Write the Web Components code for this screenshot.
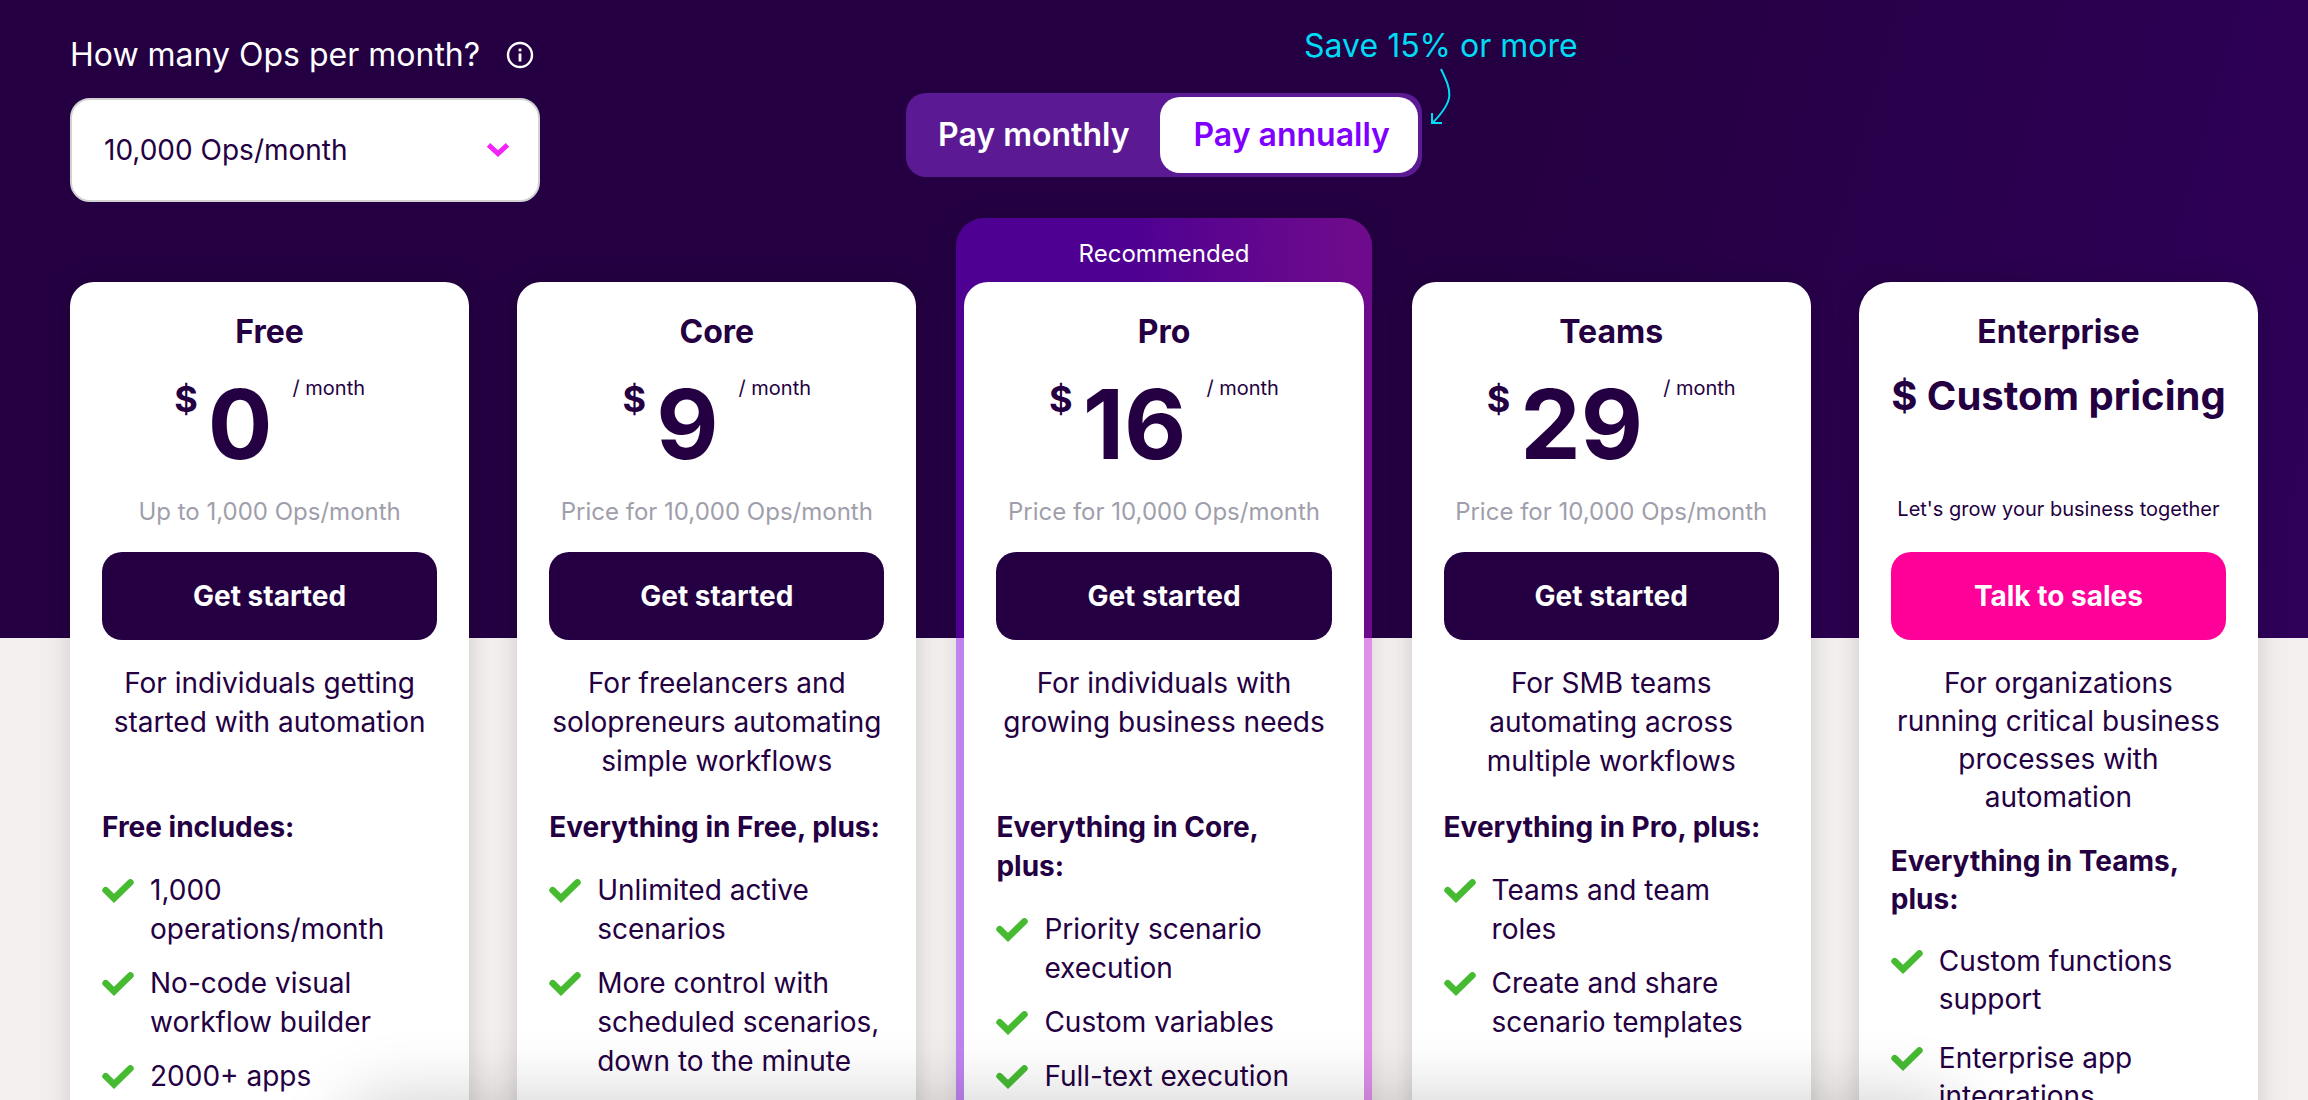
<!DOCTYPE html>
<html lang="en">
<head>
<meta charset="utf-8">
<title>Pricing</title>
<style>
  :root {
    --ink: #240042;
    --paper: #f3efee;
    --accent: #ff0099;
    --violet: #8000ff;
    --cyan: #00dcf5;
  }
  body {
    margin: 0;
    background: var(--paper);
    color: var(--ink);
    font-family: Inter, "Liberation Sans", sans-serif;
    height: 100vh;
    overflow: hidden;
  }
</style>
</head>
<body>
<pricing-page>
  <ops-select slot="ops"></ops-select>
  <billing-toggle slot="billing"></billing-toggle>

  <plan-card>
    <span slot="name">Free</span>
    <plan-price slot="price" amount="0"></plan-price>
    <span slot="note">Up to 1,000 Ops/month</span>
    <span slot="action">Get started</span>
    <span slot="summary">For individuals getting started with automation</span>
    <span slot="heading">Free includes:</span>
    <plan-feature>1,000 operations/month</plan-feature>
    <plan-feature>No-code visual workflow builder</plan-feature>
    <plan-feature>2000+ apps</plan-feature>
  </plan-card>

  <plan-card>
    <span slot="name">Core</span>
    <plan-price slot="price" amount="9"></plan-price>
    <span slot="note">Price for 10,000 Ops/month</span>
    <span slot="action">Get started</span>
    <span slot="summary">For freelancers and solopreneurs automating simple workflows</span>
    <span slot="heading">Everything in Free, plus:</span>
    <plan-feature>Unlimited active scenarios</plan-feature>
    <plan-feature>More control with scheduled scenarios, down to the minute</plan-feature>
  </plan-card>

  <plan-card recommended>
    <span slot="ribbon">Recommended</span>
    <span slot="name">Pro</span>
    <plan-price slot="price" amount="16"></plan-price>
    <span slot="note">Price for 10,000 Ops/month</span>
    <span slot="action">Get started</span>
    <span slot="summary">For individuals with growing business needs</span>
    <span slot="heading">Everything in Core, plus:</span>
    <plan-feature>Priority scenario execution</plan-feature>
    <plan-feature>Custom variables</plan-feature>
    <plan-feature>Full-text execution</plan-feature>
  </plan-card>

  <plan-card>
    <span slot="name">Teams</span>
    <plan-price slot="price" amount="29"></plan-price>
    <span slot="note">Price for 10,000 Ops/month</span>
    <span slot="action">Get started</span>
    <span slot="summary">For SMB teams automating across multiple workflows</span>
    <span slot="heading">Everything in Pro, plus:</span>
    <plan-feature>Teams and team roles</plan-feature>
    <plan-feature>Create and share scenario templates</plan-feature>
  </plan-card>

  <plan-card enterprise>
    <span slot="name">Enterprise</span>
    <plan-price slot="price" custom="$ Custom pricing"></plan-price>
    <span slot="note">Let's grow your business together</span>
    <span slot="action">Talk to sales</span>
    <span slot="summary">For organizations running critical business processes with automation</span>
    <span slot="heading">Everything in Teams, plus:</span>
    <plan-feature>Custom functions support</plan-feature>
    <plan-feature>Enterprise app integrations</plan-feature>
  </plan-card>
</pricing-page>

<script>
  const shadow = (host, html) => {
    host.attachShadow({ mode: "open" }).innerHTML = html;
  };

  // Page shell: dark band behind the controls and the top of the cards.
  customElements.define("pricing-page", class extends HTMLElement {
    constructor() {
      super();
      shadow(this, `
        <style>
          :host {
            display: block;
            min-height: 100vh;
            background:
              linear-gradient(105deg, #240042 0 63%, #2e0058 98%) top / 100% 638px no-repeat,
              var(--paper);
          }
          header, .plans { padding: 0 50px 0 70px; }
          header {
            display: grid;
            grid-template-columns: 1fr auto 1fr;
            align-items: start;
            height: 282px;
            box-sizing: border-box;
          }
          .plans {
            display: grid;
            grid-template-columns: repeat(5, minmax(0, 1fr));
            column-gap: 48px;
          }
          .dock-shadow {
            position: fixed;
            top: 100%;
            left: 15%;
            right: 15%;
            height: 120px;
            border-radius: 40px;
            box-shadow: 0 0 70px rgba(0, 0, 0, .2);
            pointer-events: none;
          }
        </style>
        <header><slot name="ops"></slot><slot name="billing"></slot></header>
        <main class="plans"><slot></slot></main>
        <div class="dock-shadow"></div>`);
    }
  });

  customElements.define("ops-select", class extends HTMLElement {
    constructor() {
      super();
      shadow(this, `
        <style>
          :host { display: block; padding-top: 35px; color: #fff; }
          .row { display: flex; align-items: center; gap: 26px; height: 40px; margin-bottom: 23px; }
          label { font-size: 32px; line-height: 40px; }
          .info { display: block; width: 28px; height: 28px; }
          .box { display: flex; align-items: center; width: 470px; position: relative; }
          select {
            appearance: none;
            width: 100%;
            height: 104px;
            padding: 0 32px;
            border: 2px solid #d2d2d2;
            border-radius: 20px;
            background: #fff;
            color: var(--ink);
            font: 28px/36px Inter, "Liberation Sans", sans-serif;
          }
          .chevron { position: absolute; right: 30px; width: 24px; height: 16px; pointer-events: none; }
        </style>
        <div class="row">
          <label for="ops">How many Ops per month?</label>
          <svg class="info" viewBox="0 0 28 28" fill="none" stroke="#fff" stroke-width="2.4" aria-hidden="true">
            <circle cx="14" cy="14" r="12"/>
            <path d="M14 12.5V20.5" stroke-width="2.8"/><path d="M14 7.6V10.4" stroke-width="2.8"/>
          </svg>
        </div>
        <div class="box">
          <select id="ops"><option>10,000 Ops/month</option></select>
          <svg class="chevron" viewBox="0 0 24 16" fill="none" stroke="#f224f7" stroke-width="5" aria-hidden="true">
            <path d="M2.5 2.8L12 11.5L21.5 2.8"/>
          </svg>
        </div>`);
    }
  });

  customElements.define("billing-toggle", class extends HTMLElement {
    constructor() {
      super();
      shadow(this, `
        <style>
          :host { display: block; position: relative; padding-top: 93px; }
          .track {
            display: flex;
            box-sizing: border-box;
            height: 84px;
            padding: 4px;
            border-radius: 20px;
            background: #5b1994;
          }
          button {
            border: 0;
            border-radius: 20px;
            background: none;
            color: #fff;
            padding: 0 31px 0 28px;
            font: 600 32px/40px Inter, "Liberation Sans", sans-serif;
          }
          button[aria-pressed="true"] { padding: 0 28px 0 33px; background: #fff; color: var(--violet); }
          .callout {
            position: absolute;
            top: 26px;
            left: 398px;
            color: var(--cyan);
            font-size: 32px;
            line-height: 40px;
            white-space: nowrap;
          }
          svg { display: block; width: 24px; height: 60px; margin-left: 126px; }
        </style>
        <div class="track">
          <button type="button" aria-pressed="false">Pay monthly</button>
          <button type="button" aria-pressed="true">Pay annually</button>
        </div>
        <div class="callout">Save 15% or more
          <svg viewBox="0 0 24 60" fill="none" stroke="#00dcf5" stroke-width="2" aria-hidden="true">
            <path d="M11 3C22 26 25 34 2.5 57"/><path d="M2 47V57H12"/>
          </svg>
        </div>`);
    }
  });

  customElements.define("plan-price", class extends HTMLElement {
    connectedCallback() {
      const custom = this.getAttribute("custom");
      const body = custom
        ? `<span class="custom">${custom}</span>`
        : `<span class="currency">$</span><span class="amount">${this.getAttribute("amount")}</span><span class="period">/ month</span>`;
      shadow(this, `
        <style>
          :host { display: flex; justify-content: center; height: 96px; white-space: nowrap; }
          .currency { font-size: 36px; line-height: 40px; font-weight: 700; margin: 3px 10px 0 0; }
          .amount { font-size: 96px; line-height: 96px; font-weight: 700; }
          .period { font-size: 20px; line-height: 24px; margin-left: 20px; }
          .custom { font-size: 40px; line-height: 40px; font-weight: 700; }
        </style>${body}`);
    }
  });

  customElements.define("plan-feature", class extends HTMLElement {
    constructor() {
      super();
      shadow(this, `
        <style>
          :host { display: flex; gap: 16px; font-size: 28px; }
          svg { flex: none; width: 32px; height: 24px; margin-top: 8px; }
        </style>
        <svg viewBox="0 0 32 24" fill="none" stroke="#46bb32" stroke-width="6.6" stroke-linecap="round" aria-hidden="true">
          <path d="M3.6 11.2L12 19.4L28.4 3.4"/>
        </svg>
        <span><slot></slot></span>`);
    }
    connectedCallback() { this.setAttribute("role", "listitem"); }
  });

  customElements.define("plan-card", class extends HTMLElement {
    constructor() {
      super();
      shadow(this, `
        <style>
          :host { display: block; position: relative; text-align: center; --line: 39px; --gap: 15px; --block: 24px; }
          :host([enterprise]) { --line: 38px; --gap: 21px; --block: 26px; }
          .ribbon { display: none; }
          :host([recommended]) .ribbon {
            display: block;
            position: absolute;
            inset: -64px -8px 0;
            border-radius: 28px;
            padding-top: 19px;
            font-size: 24px;
            line-height: 34px;
            color: #fff;
            background: linear-gradient(88deg, rgba(128, 0, 243, .45) 45%, rgba(200, 24, 230, .45) 95%);
            box-shadow: 0 0 24px rgba(0, 0, 0, .1);
          }
          article {
            position: relative;
            box-sizing: border-box;
            min-height: 960px;
            padding: 30px 32px;
            border-radius: 24px;
            background: #fff;
            box-shadow: 0 0 24px rgba(0, 0, 0, .16);
          }
          :host([recommended]) article { box-shadow: none; }
          h2 { margin: 0 0 24px; font-size: 32px; line-height: 40px; font-weight: 700; }
          .note { margin: 23px 0; font-size: 24px; line-height: 34px; color: #9f9eab; white-space: nowrap; }
          button {
            display: block;
            width: 100%;
            height: 88px;
            border: 0;
            border-radius: 20px;
            background: var(--ink);
            color: #fff;
            font: 700 28px/36px Inter, "Liberation Sans", sans-serif;
          }
          .summary { margin: 24px 0 var(--block); min-height: 120px; font-size: 28px; line-height: var(--line); }
          h3 { margin: 0 0 24px; font-size: 28px; line-height: var(--line); font-weight: 700; text-align: left; }
          .features { display: flex; flex-direction: column; gap: var(--gap); line-height: var(--line); text-align: left; }
          :host([enterprise]) article { border-radius: 32px; }
          :host([enterprise]) .note { font-size: 20px; line-height: 28px; padding-bottom: 6px; color: var(--ink); }
          :host([enterprise]) button { background: var(--accent); }
        </style>
        <div class="ribbon"><slot name="ribbon"></slot></div>
        <article>
          <h2><slot name="name"></slot></h2>
          <slot name="price"></slot>
          <p class="note"><slot name="note"></slot></p>
          <button type="button"><slot name="action"></slot></button>
          <p class="summary"><slot name="summary"></slot></p>
          <h3><slot name="heading"></slot></h3>
          <div class="features" role="list"><slot></slot></div>
        </article>`);
    }
  });
</script>
</body>
</html>
